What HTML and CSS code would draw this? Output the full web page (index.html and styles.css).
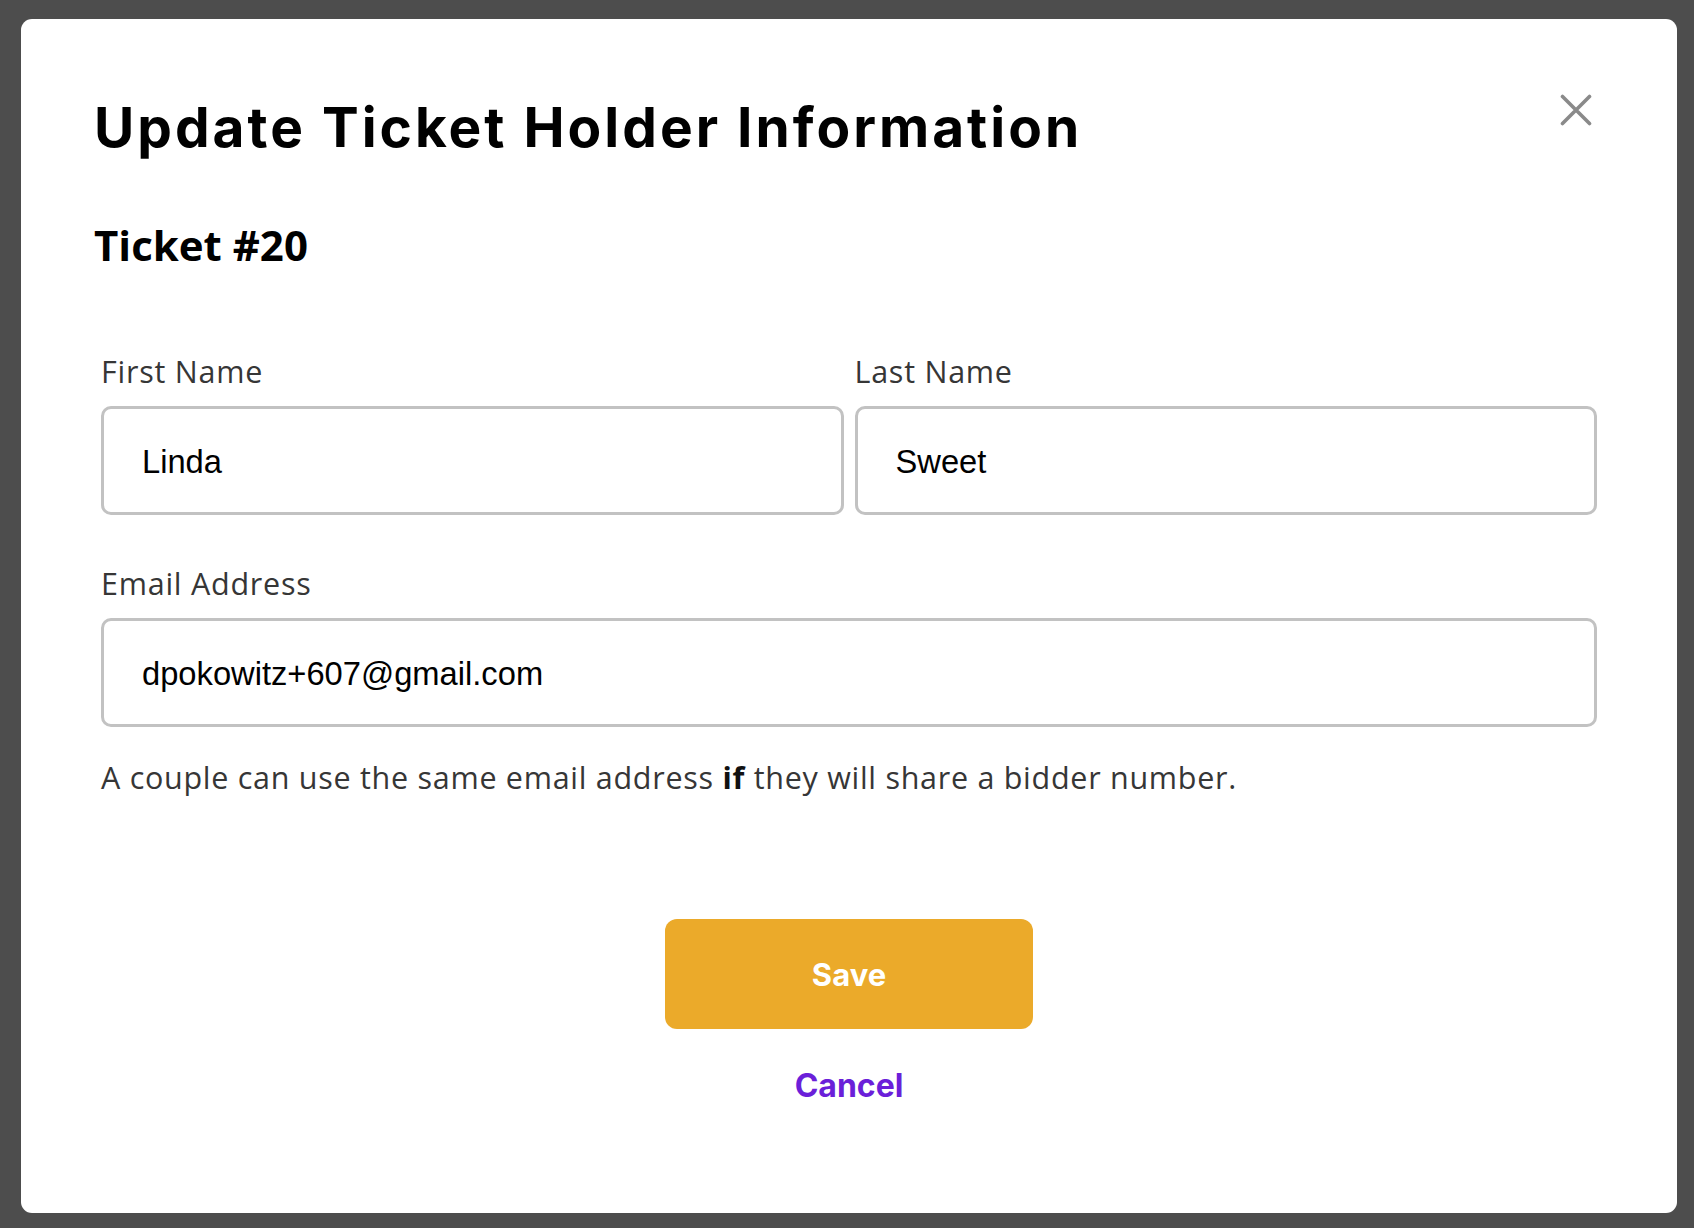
FILE: index.html
```html
<!DOCTYPE html>
<html lang="en">
<head>
<meta charset="utf-8">
<title>Update Ticket Holder Information</title>
<link rel="stylesheet" href="styles.css">
</head>
<body>
<div class="overlay">
  <div class="modal">
    <button class="close" type="button" aria-label="Close">
      <svg viewBox="0 0 32 32" width="32" height="32"><path d="M2.5 2.5L29.5 29.5M29.5 2.5L2.5 29.5" fill="none" stroke="#8a8a8a" stroke-width="3.6" stroke-linecap="round"/></svg>
    </button>
    <h1 class="title">Update Ticket Holder Information</h1>
    <h2 class="ticket">Ticket #20</h2>
    <form class="form">
      <div class="row">
        <div class="field">
          <label class="label">First Name</label>
          <input class="input" type="text" value="Linda">
        </div>
        <div class="field">
          <label class="label">Last Name</label>
          <input class="input" type="text" value="Sweet">
        </div>
      </div>
      <div class="field field-email">
        <label class="label">Email Address</label>
        <input class="input" type="text" value="dpokowitz+607@gmail.com">
      </div>
      <p class="hint">A couple can use the same email address <b>if</b> they will share a bidder number.</p>
      <div class="actions">
        <button class="save" type="button">Save</button>
        <button class="cancel" type="button">Cancel</button>
      </div>
    </form>
  </div>
</div>
</body>
</html>
```

FILE: styles.css
```css
html, body {
  margin: 0;
  padding: 0;
}
body {
  background: #4d4d4d;
  width: 1694px;
  height: 1228px;
  overflow: hidden;
}
.overlay {
  padding: 19px 17px 0 21px;
}
.modal {
  position: relative;
  background: #ffffff;
  border-radius: 11px;
  padding: 75px 80px 0 72px;
  height: 1194px;
  box-sizing: border-box;
}
.close {
  position: absolute;
  top: 75px;
  right: 85px;
  width: 32px;
  height: 32px;
  padding: 0;
  border: none;
  background: none;
  display: block;
}
.close svg {
  display: block;
}
.title {
  margin: 0 0 0 1px;
  font-family: "Inter", "Liberation Sans", sans-serif;
  font-weight: 700;
  font-size: 55px;
  line-height: 66px;
  letter-spacing: 3px;
  color: #000;
}
.ticket {
  margin: 57px 0 0 1px;
  font-family: "Open Sans", sans-serif;
  font-weight: 700;
  font-size: 42px;
  line-height: 56px;
  letter-spacing: 0;
  color: #000;
}
.form {
  margin: 78px 0 0 8px;
}
.row {
  display: grid;
  grid-template-columns: 1fr 1fr;
  column-gap: 11px;
}
.field {
  display: flex;
  flex-direction: column;
}
.field-email {
  margin-top: 48px;
}
.label {
  font-family: "Open Sans", sans-serif;
  font-size: 30.5px;
  line-height: 41px;
  letter-spacing: 0.75px;
  color: #363636;
  margin-bottom: 14px;
}
.input {
  box-sizing: border-box;
  height: 109px;
  border: 3px solid #c2c2c2;
  border-radius: 10px;
  padding: 3px 36px 0 38px;
  font-family: "Liberation Sans", Arial, sans-serif;
  font-size: 32.7px;
  color: #000;
  background: #fff;
  outline: none;
  width: 100%;
}
.hint {
  margin: 30px 0 0;
  font-family: "Open Sans", sans-serif;
  font-size: 30.5px;
  line-height: 41px;
  letter-spacing: 0.72px;
  color: #363636;
}
.hint b {
  font-weight: 700;
  color: #111;
}
.actions {
  display: flex;
  flex-direction: column;
  align-items: center;
  margin-top: 121px;
}
.save {
  width: 368px;
  height: 110px;
  border: none;
  border-radius: 12px;
  background: #ebaa2a;
  color: #fff;
  font-family: "Inter", sans-serif;
  font-weight: 700;
  font-size: 31px;
  padding: 0;
}
.cancel {
  margin-top: 37px;
  border: none;
  background: none;
  padding: 0;
  color: #6b1fd9;
  font-family: "Inter", sans-serif;
  font-weight: 700;
  font-size: 32px;
  line-height: 40px;
}
```
